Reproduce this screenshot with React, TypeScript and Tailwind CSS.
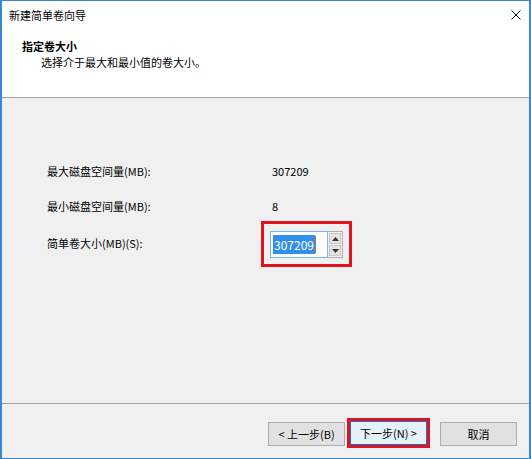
import React from 'react';

const font = { fontFamily: '"Noto Sans CJK SC", "Noto Sans", sans-serif' };

function WizardButton({ label, primary }: { label: string; primary?: boolean }) {
  return (
    <div
      className={
        'w-[77px] h-[24px] flex items-center justify-center text-[11px] text-black border ' +
        (primary ? 'bg-[#e5f1fb] border-[#0078d7]' : 'bg-[#e1e1e1] border-[#adadad]')
      }
    >
      {label}
    </div>
  );
}

function SpinBox() {
  return (
    <div className="relative flex h-[27px] w-[73px]">
      {/* edit area */}
      <div className="flex-1 flex items-center bg-white border border-[#7eb4ea] pl-[2px]">
        <span className="bg-[#3390ea] text-white text-[12px] leading-[19px] px-[1px]">307209</span>
        <span className="w-[1px] h-[17px] bg-[#c07030]"></span>
      </div>
      {/* spin buttons */}
      <div className="w-[15px] flex flex-col bg-[#f0f0f0] border-y border-r border-[#b0b0b0] p-[1px] gap-[1px]">
        <div className="flex-1 bg-[#e3e3e3] border border-[#c8c8c8] flex items-center justify-center">
          <svg width="7" height="4" viewBox="0 0 7 4">
            <path d="M0 4 L3.5 0 L7 4 Z" fill="#333" />
          </svg>
        </div>
        <div className="flex-1 bg-[#e3e3e3] border border-[#c8c8c8] flex items-center justify-center">
          <svg width="7" height="4" viewBox="0 0 7 4">
            <path d="M0 0 L3.5 4 L7 0 Z" fill="#333" />
          </svg>
        </div>
      </div>
      {/* red highlight */}
      <div className="absolute left-[-9px] right-[-9px] top-[-10px] bottom-[-9px] border-[3px] border-[#e0141e] pointer-events-none"></div>
    </div>
  );
}

export default function App() {
  return (
    <div
      className="w-[531px] h-[459px] flex flex-col border-t border-b border-l-2 border-r-2 border-[#3c86d6] bg-[#f0f0f0] overflow-hidden"
      style={font}
    >
      {/* Header */}
      <div className="h-[97px] bg-white border-b border-[#a0a0a0] shrink-0">
        <div className="h-[28px] flex items-center justify-between pl-[7px] pr-[8px]">
          <span className="text-[11px] text-black">新建简单卷向导</span>
          <svg width="10" height="10" viewBox="0 0 10 10">
            <path d="M0.5 0.5 L9.5 9.5 M9.5 0.5 L0.5 9.5" stroke="#111" strokeWidth="1" fill="none" />
          </svg>
        </div>
        <div className="mt-[9px] pl-[20px]">
          <div className="text-[11px] leading-[16px] font-bold text-black">指定卷大小</div>
          <div className="text-[11px] leading-[16px] text-black pl-[19px]">选择介于最大和最小值的卷大小。</div>
        </div>
      </div>

      {/* Body */}
      <div className="flex-1 pt-[63px] pl-[45px]">
        <div className="flex flex-col gap-[15px] text-[11px] text-black">
          <div className="grid grid-cols-[223px_auto] h-[20px] items-center">
            <span>最大磁盘空间量(MB):</span>
            <span className="pl-[2px]">307209</span>
          </div>
          <div className="grid grid-cols-[223px_auto] h-[20px] items-center">
            <span>最小磁盘空间量(MB):</span>
            <span className="pl-[2px]">8</span>
          </div>
          <div className="grid grid-cols-[223px_auto] h-[27px] items-center">
            <span className="mb-[3px]">简单卷大小(MB)(S):</span>
            <SpinBox />
          </div>
        </div>
      </div>

      {/* Footer */}
      <div className="h-[55px] shrink-0 border-t border-[#a0a0a0] flex items-start justify-end pt-[18px] pr-[12px]">
        <WizardButton label="< 上一步(B)" />
        <div className="ml-[2px] border-[3px] border-[#e0141e] -mt-[4px] p-0">
          <WizardButton label="下一步(N) >" primary />
        </div>
        <div className="ml-[10px]">
          <WizardButton label="取消" />
        </div>
      </div>
    </div>
  );
}
